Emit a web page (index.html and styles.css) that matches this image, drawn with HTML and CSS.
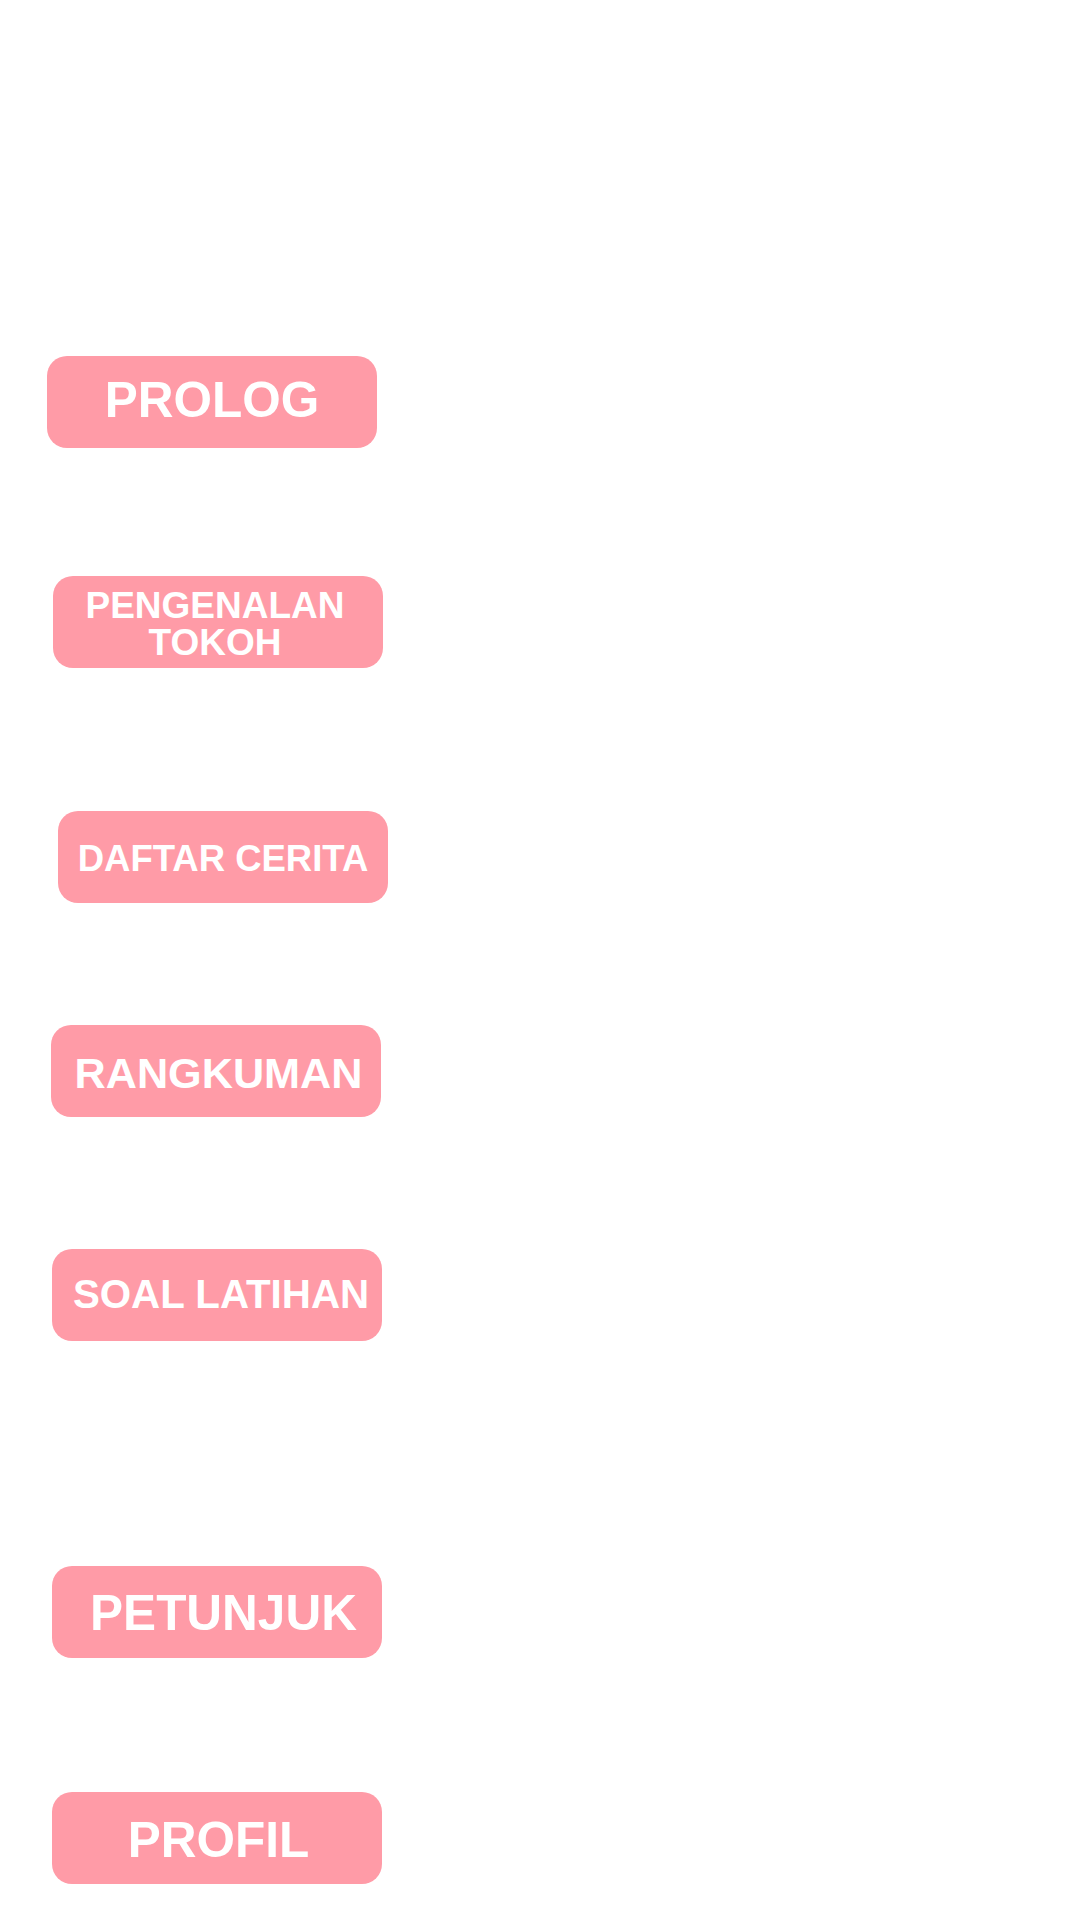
FILE: index.html
```html
<!DOCTYPE html>
<html lang="id">
<head>
<meta charset="utf-8">
<title>Menu</title>
<link rel="stylesheet" href="styles.css">
</head>
<body>
<main class="menu">
  <div class="btn btn-prolog">PROLOG</div>
  <div class="btn btn-tokoh">PENGENALAN<br>TOKOH</div>
  <div class="btn btn-daftar">DAFTAR CERITA</div>
  <div class="btn btn-rangkuman">RANGKUMAN</div>
  <div class="btn btn-soal">SOAL LATIHAN</div>
  <div class="btn btn-petunjuk">PETUNJUK</div>
  <div class="btn btn-profil">PROFIL</div>
</main>
</body>
</html>
```
FILE: styles.css
```css
html, body {
  margin: 0;
  padding: 0;
  background: #ffffff;
}
body {
  width: 1080px;
  height: 1920px;
  overflow: hidden;
  font-family: "Liberation Sans", Arial, sans-serif;
}
.menu {
  display: flex;
  flex-direction: column;
  align-items: flex-start;
}
.btn {
  box-sizing: border-box;
  width: 330px;
  height: 92px;
  border-radius: 20px;
  background: #ff9ba7;
  color: #ffffff;
  font-weight: bold;
  display: flex;
  align-items: center;
  justify-content: center;
  text-align: center;
  white-space: nowrap;
  line-height: 1.05;
}
.btn-prolog {
  margin: 356px 0 0 47px;
  font-size: 49.5px;
  padding-bottom: 4px;
}
.btn-tokoh {
  margin: 128px 0 0 53px;
  font-size: 37px;
  line-height: 37px;
  padding: 4px 6px 0 0;
}
.btn-daftar {
  margin: 143px 0 0 58px;
  font-size: 36.5px;
  padding-top: 5px;
}
.btn-rangkuman {
  margin: 122px 0 0 51px;
  font-size: 43.2px;
  padding: 5px 0 0 5px;
}
.btn-soal {
  margin: 132px 0 0 52px;
  font-size: 40.3px;
  padding-left: 8px;
}
.btn-petunjuk {
  margin: 225px 0 0 52px;
  font-size: 49.5px;
  padding: 2px 0 0 13px;
}
.btn-profil {
  margin: 134px 0 0 52px;
  font-size: 49.5px;
  padding: 4px 0 0 3px;
}
```
